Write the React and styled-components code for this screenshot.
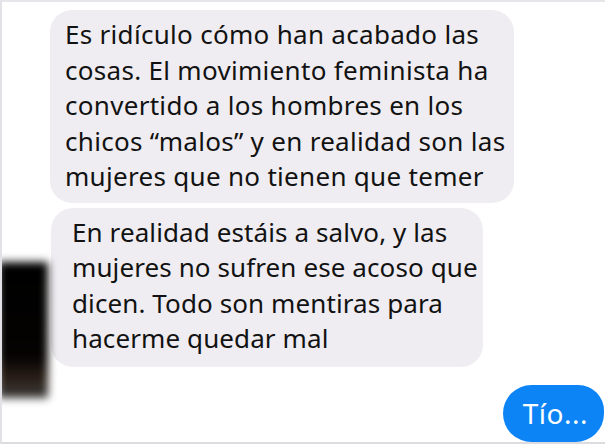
import styled, { createGlobalStyle } from "styled-components";

const GlobalStyle = createGlobalStyle`
  html, body {
    margin: 0;
    padding: 0;
    background: #ffffff;
  }
  body {
    font-family: "Noto Sans", sans-serif;
  }
`;

const StyledScreen = styled.div`
  width: 605px;
  height: 444px;
  box-sizing: border-box;
  overflow: hidden;
  display: flex;
  flex-direction: column;
  background: #fff;
  border-top: 2px solid #e6e6ea;
  border-left: 2px solid #e2e2e6;
  border-bottom: 2px solid #dcdce0;
`;

const StyledRow = styled.div`
  display: flex;
  align-items: flex-start;
  justify-content: ${(p) => (p.$outgoing ? "flex-end" : "flex-start")};
  margin-top: ${(p) => p.$top || 0}px;
  padding-left: ${(p) => p.$left || 0}px;
  padding-right: ${(p) => p.$right || 0}px;
`;

// censored avatar, a blurred dark smudge
const StyledAvatar = styled.div`
  width: 50px;
  height: 136px;
  margin-top: 54px;
  margin-bottom: -32px;
  margin-left: -4px;
  margin-right: 3px;
  flex-shrink: 0;
  background: linear-gradient(180deg, #000 0%, #050302 70%, #2a1e16 85%, #3a3a3a 100%);
  filter: blur(4px);
`;

const StyledBubble = styled.div`
  box-sizing: border-box;
  width: ${(p) => p.$width}px;
  padding: 7px 2px ${(p) => p.$padBottom}px ${(p) => p.$padLeft}px;
  border-radius: 22px;
  background: #efedf1;
  color: #121212;
  font-family: "Noto Sans", sans-serif;
  font-size: 26px;
  letter-spacing: ${(p) => p.$tracking}px;
  line-height: 35.5px;
`;

const StyledOutgoing = styled.div`
  box-sizing: border-box;
  height: 57px;
  padding: 0 16px 0 20px;
  display: flex;
  align-items: center;
  border-radius: 29px 26px 29px 29px;
  background: #0d84f5;
  color: #fff;
  font-family: "Noto Sans", sans-serif;
  font-size: 28px;
  letter-spacing: 0.5px;
`;

export default function App() {
  return (
    <>
      <GlobalStyle />
      <StyledScreen>
        <StyledRow $top={8} $left={48}>
          <StyledBubble $width={464} $padLeft={15} $padBottom={8} $tracking={0.3}>
            Es ridículo cómo han acabado las cosas. El movimiento feminista ha
            convertido a los hombres en los chicos “malos” y en realidad son
            las mujeres que no tienen que temer
          </StyledBubble>
        </StyledRow>
        <StyledRow $top={5}>
          <StyledAvatar />
          <StyledBubble $width={432} $padLeft={21} $padBottom={10} $tracking={0.1}>
            En realidad estáis a salvo, y las mujeres no sufren ese acoso que
            dicen. Todo son mentiras para hacerme quedar mal
          </StyledBubble>
        </StyledRow>
        <StyledRow $outgoing $top={18} $right={1}>
          <StyledOutgoing>Tío...</StyledOutgoing>
        </StyledRow>
      </StyledScreen>
    </>
  );
}
